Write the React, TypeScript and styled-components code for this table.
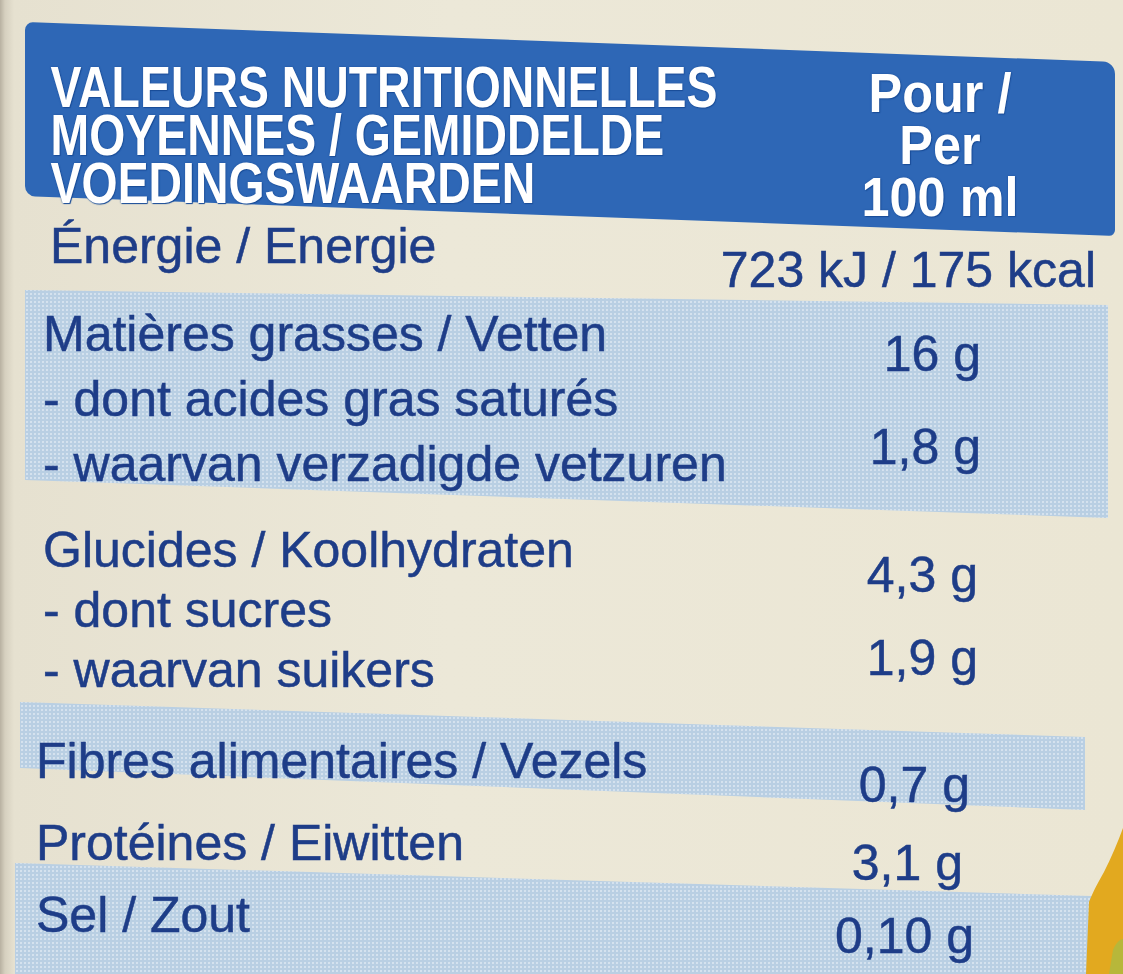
import React from 'react';
import styled, { createGlobalStyle } from 'styled-components';

interface IValue {
  text: string,
  row: number,
  span?: number,
  drop: number,
};

interface IGroup {
  labels: string[],
  values: IValue[],
  band?: boolean,
  gap: number,
  pad: number,
  pitch: number,
  indent: number,
  endPad: number,
  edges?: [number, number, number, number],
  bandLeft?: number,
  bandRight?: number,
};

const GlobalStyle = createGlobalStyle`
  html, body {
    margin: 0;
    padding: 0;
  }
  body {
    height: 974px;
    overflow: hidden;
    background: linear-gradient(90deg, #b8b1a1 0, #d6d0bf 5px, #e6e1d0 14px, #ece8d8 40%, #ebe6d4 100%);
    font-family: "Liberation Sans", Arial, sans-serif;
  }
`;

const Label = styled.div`
  position: relative;
  padding-top: 42px;
  height: 932px;
  color: #1e3d88;
`;

const Header = styled.div`
  position: relative;
  isolation: isolate;
  margin: 0 8px 0 25px;
  height: 174px;
  display: grid;
  grid-template-columns: minmax(0, 1fr) 200px;
  padding-right: 75px;
  color: #fff;
  text-shadow: 0 0 2px #1a4d98, 1px 1px 1px #1a4d98;
  &::before {
    content: '';
    position: absolute;
    inset: 0;
    z-index: -1;
    background: #2e67b6;
    border-radius: 8px 12px 6px 10px;
    transform: skewY(2.1deg);
  }
`;

const Title = styled.div`
  padding: 21px 0 0 32px;
  font-size: 58px;
  line-height: 48px;
  font-weight: 700;
  text-transform: uppercase;
  white-space: nowrap;
  transform: scaleX(0.8);
  transform-origin: left top;
`;

const PerUnit = styled.div`
  padding-top: 25px;
  font-size: 56px;
  line-height: 52px;
  font-weight: 700;
  text-align: center;
  white-space: nowrap;
  transform: scaleX(0.9);
  transform-origin: center top;
`;

const Group = styled.div<{
  $band: boolean, $gap: number, $pad: number, $pitch: number, $indent: number, $endPad: number,
  $tl: number, $tr: number, $bl: number, $br: number, $bandLeft: number, $bandRight: number,
}>`
  position: relative;
  isolation: isolate;
  margin-top: ${p => p.$gap}px;
  padding: ${p => p.$pad}px ${p => p.$endPad}px 0 ${p => p.$indent}px;
  display: grid;
  grid-template-columns: minmax(0, 1fr) auto;
  grid-auto-rows: ${p => p.$pitch}px;
  line-height: ${p => p.$pitch}px;
  font-size: 50px;
  &::before {
    content: '';
    display: ${p => (p.$band ? 'block' : 'none')};
    position: absolute;
    left: ${p => p.$bandLeft}px;
    right: ${p => p.$bandRight}px;
    top: -60px;
    bottom: -60px;
    z-index: -1;
    background-color: #b9cfe3;
    background-image: radial-gradient(circle, rgba(236, 242, 248, 0.55) 0.9px, transparent 1.4px);
    background-size: 4px 4px;
    clip-path: polygon(
      0 ${p => 60 + p.$tl}px,
      100% ${p => 60 + p.$tr}px,
      100% calc(100% - ${p => 60 - p.$br}px),
      0 calc(100% - ${p => 60 - p.$bl}px)
    );
  }
`;

const Name = styled.div<{ $row: number }>`
  grid-column: 1;
  grid-row: ${p => p.$row};
  white-space: nowrap;
  -webkit-text-stroke: 0.5px #1e3d88;
`;

const Amount = styled.div<{ $row: number, $span: number, $drop: number }>`
  grid-column: 2;
  grid-row: ${p => p.$row} / span ${p => p.$span};
  align-self: start;
  padding-top: ${p => p.$drop}px;
  text-align: right;
  white-space: nowrap;
  -webkit-text-stroke: 0.5px #1e3d88;
`;

const Corner = styled.svg`
  position: absolute;
  right: 0;
  bottom: 0;
`;

const groups: IGroup[] = [
  {
    labels: ['Énergie / Energie'],
    values: [{ text: '723 kJ / 175 kcal', row: 1, drop: 24 }],
    gap: 0, pad: 0, pitch: 60, indent: 50, endPad: 27,
  },
  {
    labels: ['Matières grasses / Vetten', '- dont acides gras saturés', '- waarvan verzadigde vetzuren'],
    values: [
      { text: '16 g', row: 1, drop: 20 },
      { text: '1,8 g', row: 2, span: 2, drop: 48 },
    ],
    band: true, gap: 20, pad: 6, pitch: 65, indent: 43, endPad: 142,
    edges: [-6, 9, -17, 21], bandLeft: 25, bandRight: 15,
  },
  {
    labels: ['Glucides / Koolhydraten', '- dont sucres', '- waarvan suikers'],
    values: [
      { text: '4,3 g', row: 1, drop: 25 },
      { text: '1,9 g', row: 2, span: 2, drop: 48 },
    ],
    gap: 23, pad: 0, pitch: 60, indent: 43, endPad: 145,
  },
  {
    labels: ['Fibres alimentaires / Vezels'],
    values: [{ text: '0,7 g', row: 1, drop: 24 }],
    band: true, gap: 20, pad: 11, pitch: 60, indent: 36, endPad: 153,
    edges: [-18, 17, -23, 19], bandLeft: 20, bandRight: 38,
  },
  {
    labels: ['Protéines / Eiwitten'],
    values: [{ text: '3,1 g', row: 1, drop: 20 }],
    gap: 22, pad: 0, pitch: 60, indent: 36, endPad: 160,
  },
  {
    labels: ['Sel / Zout'],
    values: [{ text: '0,10 g', row: 1, drop: 21 }],
    band: true, gap: 0, pad: 12, pitch: 60, indent: 36, endPad: 149,
    edges: [-10, 24, 60, 60], bandLeft: 15, bandRight: 0,
  },
];

const App: React.FC = () => {
  return (
    <>
      <GlobalStyle />
      <Label>
        <Header>
          <Title>
            <div>Valeurs nutritionnelles</div>
            <div>Moyennes / Gemiddelde</div>
            <div>Voedingswaarden</div>
          </Title>
          <PerUnit>
            <div>Pour /</div>
            <div>Per</div>
            <div>100 ml</div>
          </PerUnit>
        </Header>
        {groups.map((g, i) => {
          const [tl, tr, bl, br] = g.edges || [0, 0, 0, 0];
          return (
            <Group
              key={i}
              $band={!!g.band}
              $gap={g.gap}
              $pad={g.pad}
              $pitch={g.pitch}
              $indent={g.indent}
              $endPad={g.endPad}
              $tl={tl}
              $tr={tr}
              $bl={bl}
              $br={br}
              $bandLeft={g.bandLeft || 0}
              $bandRight={g.bandRight || 0}
            >
              {g.labels.map((l, j) => <Name key={j} $row={j + 1}>{l}</Name>)}
              {g.values.map((v, j) => (
                <Amount key={'v' + j} $row={v.row} $span={v.span || 1} $drop={v.drop}>{v.text}</Amount>
              ))}
            </Group>
          );
        })}
        <Corner width="40" height="146" viewBox="0 0 40 146">
          <path d="M40 0 C35 14 28 30 21 44 C14 56 9 66 6 74 L3 146 L40 146 Z" fill="#e2a91f" />
          <path d="M30 122 C33 114 38 111 40 111 L40 146 L26 146 Z" fill="#b7b73a" />
        </Corner>
      </Label>
    </>
  );
};

export default App;
